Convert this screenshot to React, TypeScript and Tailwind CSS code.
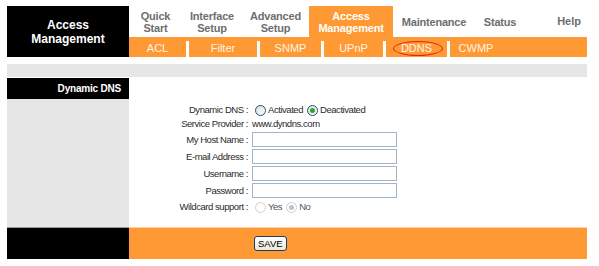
import React from "react";

const navItems: { label: string[]; w: string; active?: boolean; align?: string }[] = [
  { label: ["Quick", "Start"], w: "w-[53px]" },
  { label: ["Interface", "Setup"], w: "w-[60px]" },
  { label: ["Advanced", "Setup"], w: "w-[67px]" },
  { label: ["Access", "Management"], w: "w-[84px]", active: true },
  { label: ["Maintenance"], w: "w-[82px]" },
  { label: ["Status"], w: "w-[50px]" },
];

const subItems: { label: string; w: string }[] = [
  { label: "ACL", w: "w-[57px]" },
  { label: "Filter", w: "w-[68px]" },
  { label: "SNMP", w: "w-[61px]" },
  { label: "UPnP", w: "w-[59px]" },
  { label: "DDNS", w: "w-[61px]" },
  { label: "CWMP", w: "w-[52px]" },
];

function Radio({ checked, disabled }: { checked?: boolean; disabled?: boolean }) {
  return (
    <span
      className={
        "inline-flex h-[11px] w-[11px] items-center justify-center rounded-full border " +
        (disabled
          ? "border-[#cfcfcf] bg-white"
          : "border-[#1c5180] bg-gradient-to-br from-[#dcdcd6] to-white")
      }
    >
      {checked && (
        <span
          className={
            "h-[5px] w-[5px] rounded-full " + (disabled ? "bg-[#c2c2c2]" : "bg-[#2ea52e]")
          }
        />
      )}
    </span>
  );
}

function Input() {
  return <div className="h-[15px] w-[145px] border border-[#9fb5c9] bg-white" />;
}

const labelCls = "text-right pr-[4px] whitespace-nowrap";

export default function App() {
  return (
    <div
      className="w-[599px] h-[266px] bg-white pl-[7px] pt-[6px] text-[#222]"
      style={{ fontFamily: '"Liberation Sans", Arial, sans-serif' }}
    >
      <div className="w-[580px]">
        {/* header */}
        <div className="flex h-[51px]">
          <div className="flex w-[122px] flex-col items-center justify-center bg-black text-[12px] font-bold leading-[14px] text-white">
            <span>Access</span>
            <span>Management</span>
          </div>
          <div className="flex flex-1 flex-col">
            <div className="flex h-[31px]">
              {navItems.map((it) => (
                <div
                  key={it.label.join(" ")}
                  className={
                    it.w +
                    " flex flex-col items-center justify-center text-[11px] font-bold leading-[12px] tracking-[-0.2px] " +
                    (it.active ? "bg-[#ff9933] text-white" : "text-[#6e6e6e]")
                  }
                >
                  {it.label.map((l) => (
                    <span key={l}>{l}</span>
                  ))}
                </div>
              ))}
              <div className="flex flex-1 items-center justify-end pr-[6px] text-[11px] font-bold text-[#6e6e6e]">
                Help
              </div>
            </div>
            <div className="relative flex h-[20px] bg-[#ff9933]">
              {subItems.map((s, i) => (
                <React.Fragment key={s.label}>
                  {i > 0 && <div className="mt-[4px] h-[16px] w-[3px] bg-white" />}
                  <div
                    className={
                      s.w + " flex items-center justify-center pt-[3px] text-[11px] text-[#fff3e4]"
                    }
                  >
                    {s.label}
                  </div>
                </React.Fragment>
              ))}
              <div className="absolute left-[264px] top-[4px] h-[15px] w-[50px] rounded-[50%] border-[1.5px] border-[#e3231b]" />
            </div>
          </div>
        </div>

        {/* gray bar */}
        <div className="mt-[7px] h-[13px] bg-[#e6e6e6]" />

        {/* content */}
        <div className="mt-[1px] flex h-[149px]">
          <div className="w-[122px] bg-[#e6e6e6]">
            <div className="flex h-[21px] items-center justify-end bg-black pr-[8px] text-[10px] font-bold tracking-[-0.2px] text-white">
              Dynamic DNS
            </div>
          </div>
          <div className="flex-1 bg-white pt-[25px] text-[9.5px] tracking-[-0.45px] text-[#2a2a2a]">
            <div className="grid grid-cols-[123px_1fr] items-center">
              <div className={labelCls + " h-[14px] leading-[14px]"}>Dynamic DNS :</div>
              <div className="flex h-[14px] items-center gap-[2px] pl-[3px]">
                <Radio />
                <span className="mr-[2px]">Activated</span>
                <Radio checked />
                <span>Deactivated</span>
              </div>

              <div className={labelCls + " h-[14px] leading-[14px]"}>Service Provider :</div>
              <div className="h-[14px] leading-[14px]">www.dyndns.com</div>

              <div className={labelCls + " h-[17px] leading-[17px]"}>My Host Name :</div>
              <div className="flex h-[17px] items-center">
                <Input />
              </div>

              <div className={labelCls + " h-[17px] leading-[17px]"}>E-mail Address :</div>
              <div className="flex h-[17px] items-center">
                <Input />
              </div>

              <div className={labelCls + " h-[17px] leading-[17px]"}>Username :</div>
              <div className="flex h-[17px] items-center">
                <Input />
              </div>

              <div className={labelCls + " h-[17px] leading-[17px]"}>Password :</div>
              <div className="flex h-[17px] items-center">
                <Input />
              </div>

              <div className={labelCls + " h-[16px] leading-[16px]"}>Wildcard support :</div>
              <div className="flex h-[16px] items-center gap-[2px] pl-[3px]">
                <Radio disabled />
                <span className="mr-[2px] text-[#555]">Yes</span>
                <Radio checked disabled />
                <span className="text-[#555]">No</span>
              </div>
            </div>
          </div>
        </div>

        {/* footer */}
        <div className="flex h-[32px]">
          <div className="w-[122px] border-t border-[#9a9a9a] bg-black" />
          <div className="flex flex-1 items-center border-t border-[#ffd3a6] bg-[#ff9933] pl-[125px]">
            <button className="h-[15px] rounded-[3px] border border-[#1a3d6b] bg-gradient-to-b from-white to-[#ece9d8] px-[3px] text-[9.5px] leading-[12px] text-black">
              SAVE
            </button>
          </div>
        </div>
      </div>
    </div>
  );
}
